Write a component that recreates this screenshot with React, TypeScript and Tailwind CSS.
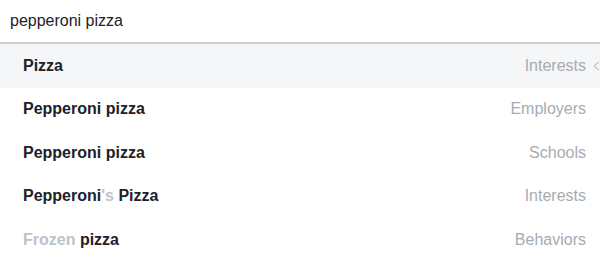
const rows = [
  { parts: [{ t: "Pizza", dim: false }], label: "Interests", active: true },
  { parts: [{ t: "Pepperoni pizza", dim: false }], label: "Employers" },
  { parts: [{ t: "Pepperoni pizza", dim: false }], label: "Schools" },
  {
    parts: [
      { t: "Pepperoni", dim: false },
      { t: "'s", dim: true },
      { t: " Pizza", dim: false },
    ],
    label: "Interests",
  },
  {
    parts: [
      { t: "Frozen", dim: true },
      { t: " pizza", dim: false },
    ],
    label: "Behaviors",
  },
];

export default function App() {
  return (
    <div
      className="w-[600px] h-[266px] overflow-hidden bg-white text-[16px] text-[#1d2129]"
      style={{ fontFamily: '"Liberation Sans", Arial, sans-serif' }}
    >
      <div className="h-[44px] flex items-center pl-[10px] border-b-2 border-[#cdd1d9]">
        pepperoni pizza
      </div>
      <ul>
        {rows.map((row, i) => (
          <li
            key={i}
            className={
              "relative h-[43.5px] flex items-center justify-between pl-[23px] pr-[14px] " +
              (row.active ? "bg-[#f5f6f7]" : "")
            }
          >
            <span className="font-bold whitespace-pre">
              {row.parts.map((p, j) => (
                <span key={j} className={p.dim ? "text-[#bec2c9]" : ""}>
                  {p.t}
                </span>
              ))}
            </span>
            <span className="text-[#a7abb2]">{row.label}</span>
            {row.active && (
              <svg
                className="absolute right-0 top-1/2 -translate-y-1/2"
                width="7"
                height="10"
                viewBox="0 0 7 10"
              >
                <path d="M6 1 L1 5 L6 9" fill="none" stroke="#c4c8ce" strokeWidth="1.2" />
              </svg>
            )}
          </li>
        ))}
      </ul>
    </div>
  );
}
